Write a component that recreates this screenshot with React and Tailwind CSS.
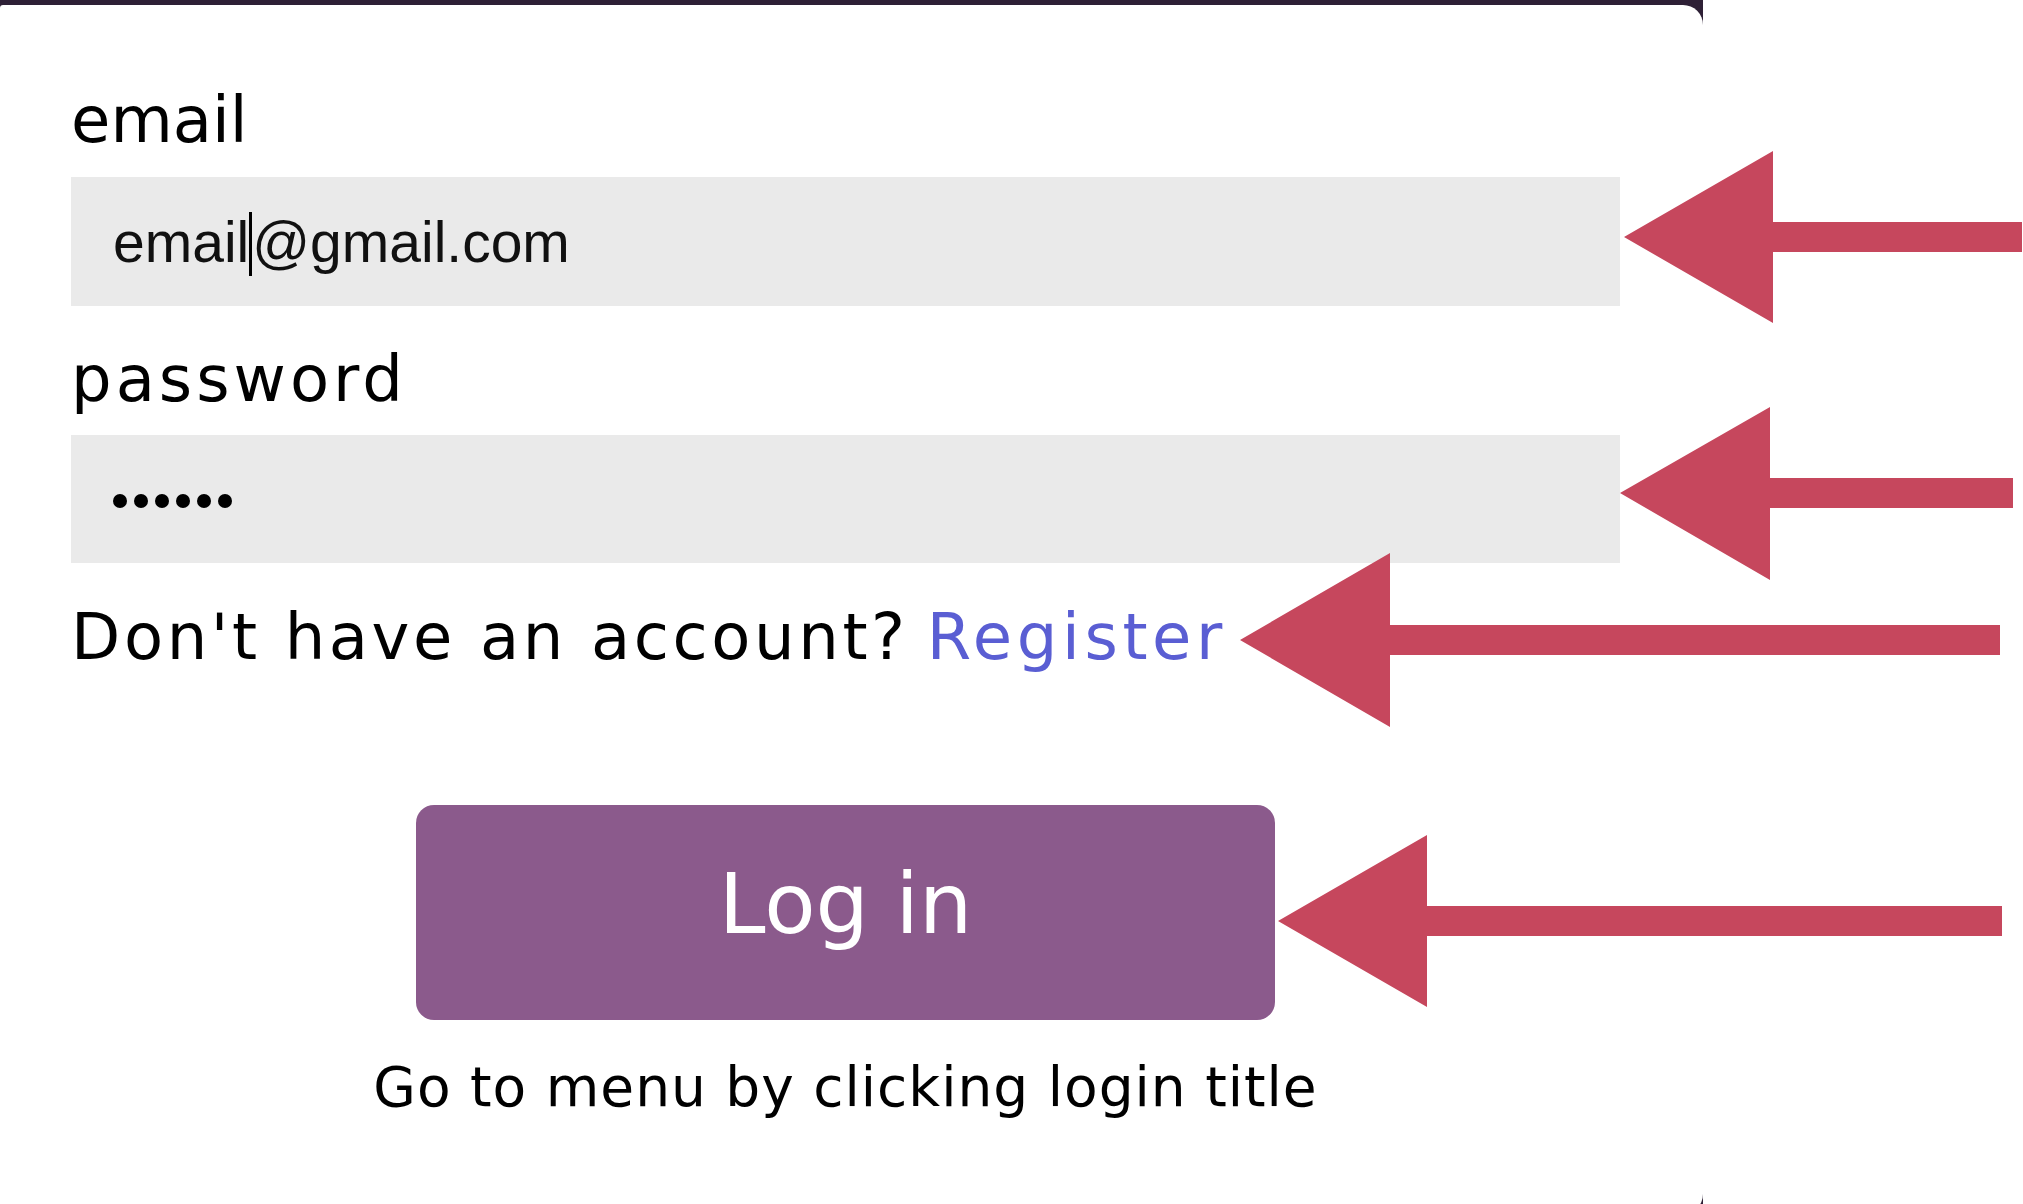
export default function App() {
  const arrows = [
    { tipX: 1624, tipY: 237, hx: 1773, ht: 151, hb: 323, st: 222, sb: 252, end: 2022 },
    { tipX: 1620, tipY: 493, hx: 1770, ht: 407, hb: 580, st: 478, sb: 508, end: 2013 },
    { tipX: 1240, tipY: 640, hx: 1390, ht: 553, hb: 727, st: 625, sb: 655, end: 2000 },
    { tipX: 1278, tipY: 921, hx: 1427, ht: 835, hb: 1007, st: 906, sb: 936, end: 2002 },
  ];
  return (
    <div className="relative w-[2023px] h-[1204px] overflow-hidden bg-white">
      <div className="w-[1703px] h-[1214px] bg-[#2e2036] pt-[5px]">
        <div className="h-full bg-white rounded-tr-[20px] rounded-br-[20px] rounded-tl-[3px] pl-[71px] pt-[83px] font-['DejaVu_Sans',sans-serif] text-black">
          <div className="w-[1549px] flex flex-col">
            <div className="text-[64px] leading-[64px]">email</div>
            <div className="mt-[25px] h-[129px] bg-[#eaeaea] flex items-center pl-[42px] font-['Liberation_Sans',Arial,sans-serif] text-[57px] leading-[64px] text-[#111]">
              <span>email</span>
              <span className="inline-block w-[3px] h-[64px] bg-black mt-[4px]" />
              <span>@gmail.com</span>
            </div>
            <div className="mt-[41px] text-[64px] leading-[64px] tracking-[4px]">password</div>
            <div className="mt-[24px] h-[128px] bg-[#eaeaea] flex items-center pl-[42px]">
              <div className="flex gap-[7px] mt-[4px]">
                {[0, 1, 2, 3, 4, 5].map((i) => (
                  <span key={i} className="block w-[14px] h-[14px] rounded-full bg-black" />
                ))}
              </div>
            </div>
            <div className="mt-[42px] text-[64px] leading-[64px] tracking-[3.6px] whitespace-nowrap">
              Don't have an account?<span className="text-[#5a5ed3] ml-[18px] tracking-[4.6px]">Register</span>
            </div>
            <div className="mt-[136px] self-center w-[859px] h-[215px] rounded-[18px] bg-[#8b5a8c] text-white text-[84px] leading-[84px] flex items-center justify-center pb-[18px]">
              Log in
            </div>
            <div className="mt-[40px] self-center text-[55px] leading-[55px] tracking-[1px] whitespace-nowrap">
              Go to menu by clicking login title
            </div>
          </div>
        </div>
      </div>
      <svg className="absolute inset-0 pointer-events-none" width="2023" height="1204" viewBox="0 0 2023 1204">
        {arrows.map((a, i) => (
          <path
            key={i}
            fill="#c6475d"
            d={`M${a.tipX} ${a.tipY} L${a.hx} ${a.ht} L${a.hx} ${a.st} L${a.end} ${a.st} L${a.end} ${a.sb} L${a.hx} ${a.sb} L${a.hx} ${a.hb} Z`}
          />
        ))}
      </svg>
    </div>
  );
}
